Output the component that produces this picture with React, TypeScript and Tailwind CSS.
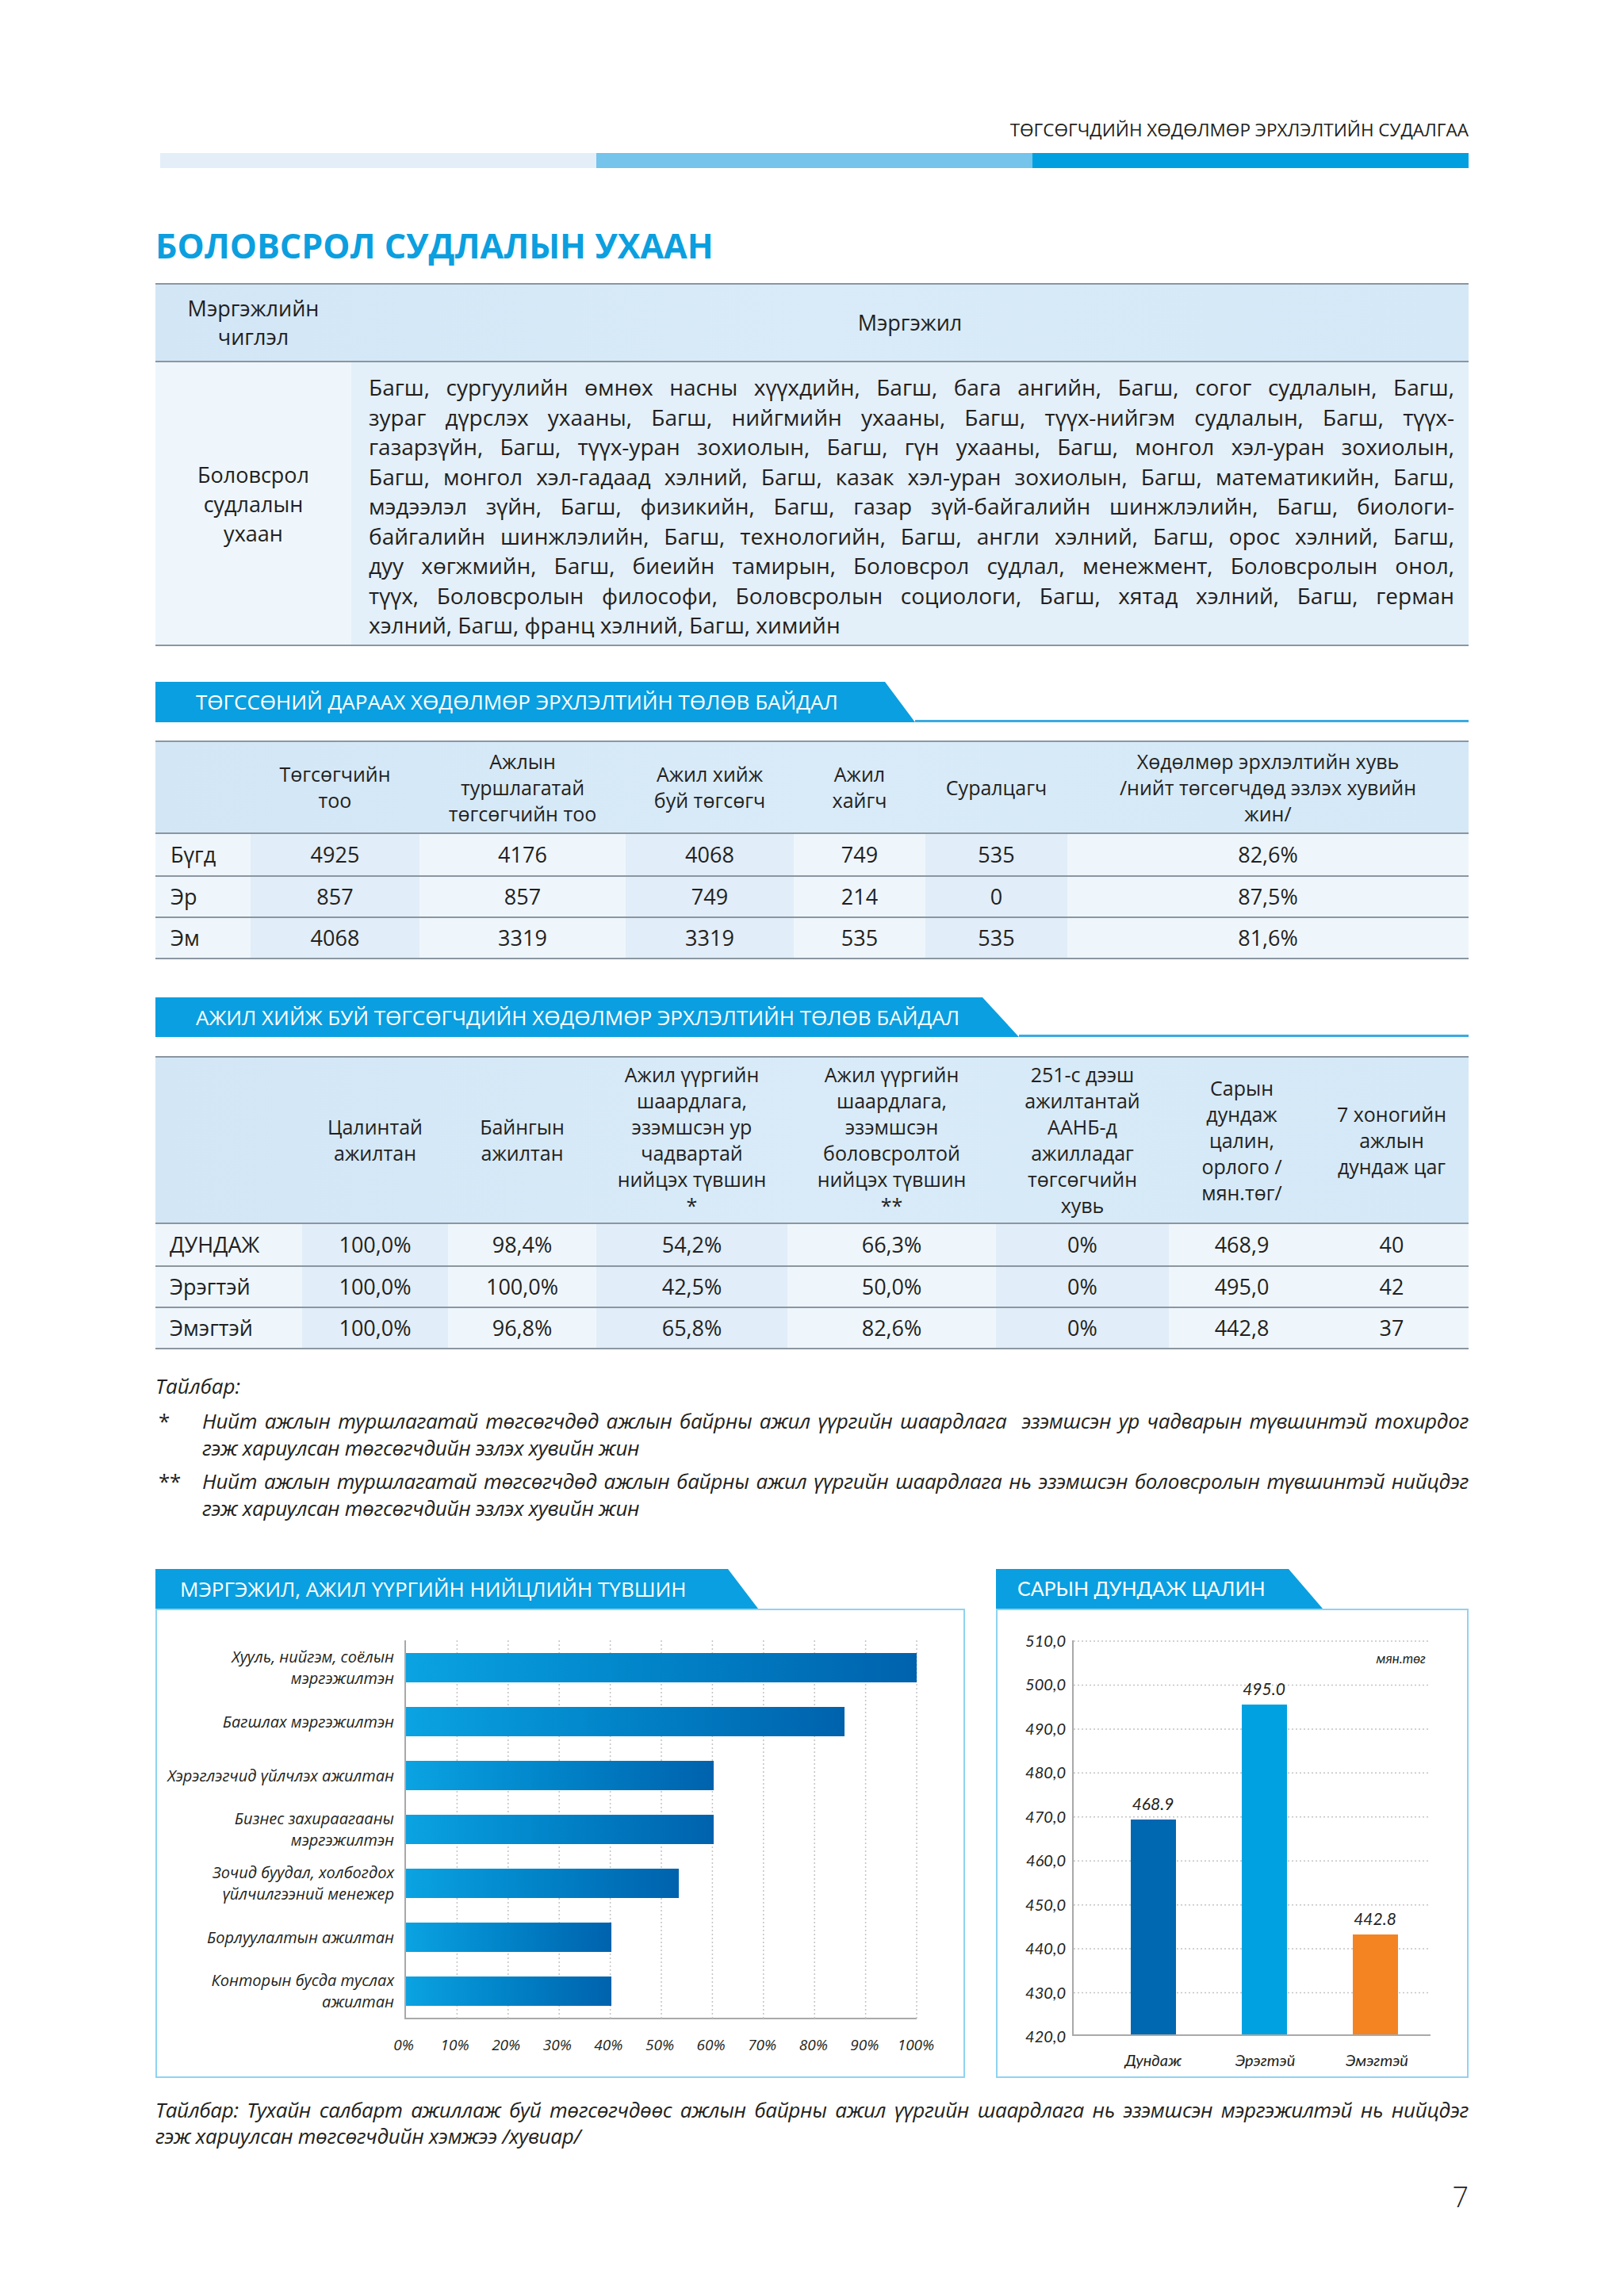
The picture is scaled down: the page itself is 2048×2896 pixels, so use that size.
import React from "react";

const sans = "font-['Open_Sans','Noto_Sans',sans-serif]";
const chartFont = "font-['Lato','Open_Sans',sans-serif]";

const bodyLines = [
  "Багш, сургуулийн өмнөх насны хүүхдийн, Багш, бага ангийн, Багш, согог судлалын, Багш,",
  "зураг дүрслэх ухааны, Багш, нийгмийн ухааны, Багш, түүх-нийгэм судлалын, Багш, түүх-",
  "газарзүйн, Багш, түүх-уран зохиолын, Багш, гүн ухааны, Багш, монгол хэл-уран зохиолын,",
  "Багш, монгол хэл-гадаад хэлний, Багш, казак хэл-уран зохиолын, Багш, математикийн, Багш,",
  "мэдээлэл зүйн, Багш, физикийн, Багш, газар зүй-байгалийн шинжлэлийн, Багш, биологи-",
  "байгалийн шинжлэлийн, Багш, технологийн, Багш, англи хэлний, Багш, орос хэлний, Багш,",
  "дуу хөгжмийн, Багш, биеийн тамирын, Боловсрол судлал, менежмент, Боловсролын онол,",
  "түүх, Боловсролын философи, Боловсролын социологи, Багш, хятад хэлний, Багш, герман",
  "хэлний, Багш, франц хэлний, Багш, химийн",
];

const t2Cols = ["w-[120px]", "w-[213px]", "w-[260px]", "w-[212px]", "w-[166px]", "w-[179px]", "flex-1"];
const t2Head = [
  [""],
  ["Төгсөгчийн", "тоо"],
  ["Ажлын", "туршлагатай", "төгсөгчийн тоо"],
  ["Ажил хийж", "буй төгсөгч"],
  ["Ажил", "хайгч"],
  ["Суралцагч"],
  ["Хөдөлмөр эрхлэлтийн хувь", "/нийт төгсөгчдөд эзлэх хувийн", "жин/"],
];
const t2Rows = [
  ["Бүгд", "4925", "4176", "4068", "749", "535", "82,6%"],
  ["Эр", "857", "857", "749", "214", "0", "87,5%"],
  ["Эм", "4068", "3319", "3319", "535", "535", "81,6%"],
];

const t3Cols = ["w-[185px]", "w-[184px]", "w-[187px]", "w-[241px]", "w-[263px]", "w-[218px]", "w-[184px]", "flex-1"];
const t3Head = [
  [""],
  ["Цалинтай", "ажилтан"],
  ["Байнгын", "ажилтан"],
  ["Ажил үүргийн", "шаардлага,", "эзэмшсэн ур", "чадвартай", "нийцэх түвшин", "*"],
  ["Ажил үүргийн", "шаардлага,", "эзэмшсэн", "боловсролтой", "нийцэх түвшин", "**"],
  ["251-с дээш", "ажилтантай", "ААНБ-д", "ажилладаг", "төгсөгчийн", "хувь"],
  ["Сарын", "дундаж", "цалин,", "орлого /", "мян.төг/"],
  ["7 хоногийн", "ажлын", "дундаж цаг"],
];
const t3Rows = [
  ["ДУНДАЖ", "100,0%", "98,4%", "54,2%", "66,3%", "0%", "468,9", "40"],
  ["Эрэгтэй", "100,0%", "100,0%", "42,5%", "50,0%", "0%", "495,0", "42"],
  ["Эмэгтэй", "100,0%", "96,8%", "65,8%", "82,6%", "0%", "442,8", "37"],
];

const matchBars = [
  { label: ["Хууль, нийгэм, соёлын", "мэргэжилтэн"], value: 100 },
  { label: ["Багшлах мэргэжилтэн"], value: 85.8 },
  { label: ["Хэрэглэгчид үйлчлэх ажилтан"], value: 60.3 },
  { label: ["Бизнес захираагааны", "мэргэжилтэн"], value: 60.3 },
  { label: ["Зочид буудал, холбогдох", "үйлчилгээний менежер"], value: 53.4 },
  { label: ["Борлуулалтын ажилтан"], value: 40.2 },
  { label: ["Конторын бусда туслах", "ажилтан"], value: 40.2 },
];

const salary = [
  { name: "Дундаж", value: 468.9, text: "468.9", color: "bg-[#0067b1]" },
  { name: "Эрэгтэй", value: 495.0, text: "495.0", color: "bg-[#00a1e1]" },
  { name: "Эмэгтэй", value: 442.8, text: "442.8", color: "bg-[#f48421]" },
];

function Banner({ children, boxClass }: { children: React.ReactNode; boxClass: string }) {
  return (
    <div className="flex items-end">
      <div className={`flex items-center bg-[#0a9fe0] text-white ${boxClass}`}>{children}</div>
      <div className="h-[3px] flex-1 bg-[#3aaae1]" />
    </div>
  );
}

function Lines({ lines }: { lines: string[] }) {
  return (
    <>
      {lines.map((l, i) => (
        <div key={i}>{l}</div>
      ))}
    </>
  );
}

function MatchChart() {
  return (
    <div className="flex w-[1021px] flex-col">
      <div className="flex h-[50px] items-center">
        <div className={`flex h-full w-[760px] items-center bg-[#0a9fe0] pl-[31px] text-[26px] text-white [clip-path:polygon(0_0,calc(100%_-_38px)_0,100%_100%,0_100%)] ${sans}`}>
          МЭРГЭЖИЛ, АЖИЛ ҮҮРГИЙН НИЙЦЛИЙН ТҮВШИН
        </div>
      </div>
      <div className="h-[592px] border-2 border-[#8fd3f1] pt-[38px]">
        <div className="flex">
          <div className="flex w-[299px] flex-col text-right text-[20px] italic leading-[27px] text-[#231f20]">
            {matchBars.map((b, i) => (
              <div key={i} className="flex h-[68px] flex-col items-end justify-center">
                <Lines lines={b.label} />
              </div>
            ))}
          </div>
          <div className="relative ml-[13px] h-[478px] w-[646px] border-b-2 border-l-2 border-[#a9a9a9]">
            <svg className="absolute inset-0" width="646" height="478">
              {Array.from({ length: 10 }, (_, i) => (
                <line
                  key={i}
                  x1={(i + 1) * 64.4}
                  x2={(i + 1) * 64.4}
                  y1={0}
                  y2={478}
                  stroke="#c4c4c4"
                  strokeWidth="1.5"
                  strokeDasharray="2 3"
                />
              ))}
            </svg>
            <div className="relative flex flex-col">
              {matchBars.map((b, i) => (
                <div key={i} className="flex h-[68px] items-center">
                  <div
                    className="h-[37px] bg-linear-to-r from-[#0ba3e2] to-[#0062ad]"
                    style={{ width: `${(b.value / 100) * 644}px` }}
                  />
                </div>
              ))}
            </div>
          </div>
        </div>
        <div className="ml-[281px] mt-[18px] flex w-[706px] justify-between text-[19px] italic text-[#231f20]">
          {Array.from({ length: 11 }, (_, i) => (
            <div key={i} className="w-[60px] text-center">
              {i * 10}%
            </div>
          ))}
        </div>
      </div>
    </div>
  );
}

function SalaryChart() {
  const px = 499 / 90;
  return (
    <div className="flex flex-1 flex-col">
      <div className="flex h-[50px] items-center">
        <div className={`flex h-full w-[412px] items-center bg-[#0a9fe0] pl-[27px] text-[25px] text-white [clip-path:polygon(0_0,calc(100%_-_43px)_0,100%_100%,0_100%)] ${chartFont}`}>
          САРЫН ДУНДАЖ ЦАЛИН
        </div>
      </div>
      <div className={`h-[592px] border-2 border-[#8fd3f1] pt-[38px] text-[#231f20] ${chartFont}`}>
        <div className="flex items-start">
          <div className="-mt-[13px] flex h-[525px] w-[86px] flex-col justify-between text-right text-[20px] italic leading-[26px]">
            {Array.from({ length: 10 }, (_, i) => (
              <div key={i}>{(510 - i * 10).toFixed(1).replace(".", ",")}</div>
            ))}
          </div>
          <div className="relative ml-[8px] h-[499px] w-[452px] border-b-2 border-l-2 border-[#a9a9a9]">
            <svg className="absolute inset-0" width="452" height="499">
              {Array.from({ length: 9 }, (_, i) => (
                <line
                  key={i}
                  x1={0}
                  x2={450}
                  y1={i * px * 10 + 1}
                  y2={i * px * 10 + 1}
                  stroke="#c4c4c4"
                  strokeWidth="1.5"
                  strokeDasharray="2 3"
                />
              ))}
            </svg>
            <div className="absolute right-[6px] top-[10px] text-[17px] italic">мян.төг</div>
            <div className="relative flex h-full items-end pl-[30px]">
              {salary.map((s) => (
                <div key={s.name} className="flex w-[141px] flex-col items-center justify-end">
                  <div className="mb-[7px] text-[21px] italic leading-[26px]">{s.text}</div>
                  <div className={`w-[57px] ${s.color}`} style={{ height: `${(s.value - 420) * px}px` }} />
                </div>
              ))}
            </div>
          </div>
        </div>
        <div className="ml-[126px] mt-[4px] flex text-[20px] italic leading-[26px]">
          {salary.map((s) => (
            <div key={s.name} className="w-[141px] text-center">
              {s.name}
            </div>
          ))}
        </div>
      </div>
    </div>
  );
}

export default function App() {
  return (
    <div className={`h-[2896px] w-[2048px] bg-white text-[#231f20] ${sans}`}>
      <div className="ml-[196px] w-[1656px] pt-[149px]">
        {/* header */}
        <div className="text-right text-[22.5px] leading-[30px]">ТӨГСӨГЧДИЙН ХӨДӨЛМӨР ЭРХЛЭЛТИЙН СУДАЛГАА</div>
        <div className="mt-[14px] flex h-[19px] pl-[6px]">
          <div className="flex-1 bg-[#e3eef8]" />
          <div className="flex-1 bg-[#74c4ec]" />
          <div className="flex-1 bg-[#00a0e0]" />
        </div>

        <div className="mt-[72px] text-[43px] font-bold leading-[52px] text-[#0b9fdf]">БОЛОВСРОЛ СУДЛАЛЫН УХААН</div>

        {/* table 1 */}
        <div className="mt-[21px] border-y-2 border-[#8b96a0]">
          <div className="flex h-[98px] border-b-2 border-[#8b96a0] bg-linear-to-r from-[#d2e6f6] via-[#d9ebf8] to-[#d4e8f7] text-[27px] leading-[36px]">
            <div className="flex w-[247px] flex-col items-center justify-center text-center">
              <div>Мэргэжлийн</div>
              <div>чиглэл</div>
            </div>
            <div className="flex flex-1 items-center justify-center">Мэргэжил</div>
          </div>
          <div className="flex h-[356px]">
            <div className="flex w-[247px] flex-col items-center justify-center bg-[#eef6fc] text-center text-[27px] leading-[37px]">
              <div>Боловсрол</div>
              <div>судлалын</div>
              <div>ухаан</div>
            </div>
            <div className="flex-1 bg-[#e3eff9] pl-[22px] pr-[18px] pt-[13px] text-[28px] leading-[37.5px]">
              {bodyLines.map((l, i) => (
                <div key={i} className={i < bodyLines.length - 1 ? "text-justify [text-align-last:justify]" : ""}>
                  {l}
                </div>
              ))}
            </div>
          </div>
        </div>

        {/* banner 1 */}
        <div className="mt-[45px]">
          <Banner boxClass="h-[51px] w-[958px] pl-[51px] text-[26px] [clip-path:polygon(0_0,calc(100%_-_38px)_0,100%_100%,0_100%)]">
            ТӨГССӨНИЙ ДАРААХ ХӨДӨЛМӨР ЭРХЛЭЛТИЙН ТӨЛӨВ БАЙДАЛ
          </Banner>
        </div>

        {/* table 2 */}
        <div className="mt-[23px] border-y-2 border-[#8b96a0]">
          <div className="flex h-[116px] border-b-2 border-[#8b96a0] bg-linear-to-r from-[#d2e6f6] via-[#d9ebf8] to-[#d4e8f7] text-[25px] leading-[33px]">
            {t2Head.map((h, i) => (
              <div key={i} className={`${t2Cols[i]} flex flex-col items-center justify-center text-center`}>
                <Lines lines={h} />
              </div>
            ))}
          </div>
          {t2Rows.map((r, ri) => (
            <div key={ri} className={`flex h-[52px] text-[27px] ${ri > 0 ? "border-t-2 border-[#8b96a0]" : ""}`}>
              {r.map((c, ci) => (
                <div
                  key={ci}
                  className={`${t2Cols[ci]} flex items-center ${ci === 0 ? "pl-[19px]" : "justify-center"} ${ci % 2 === 1 ? "bg-[#e1edf8]" : "bg-[#eef6fc]"}`}
                >
                  {c}
                </div>
              ))}
            </div>
          ))}
        </div>

        {/* banner 2 */}
        <div className="mt-[48px]">
          <Banner boxClass="h-[50px] w-[1089px] pl-[51px] text-[26px] [clip-path:polygon(0_0,calc(100%_-_46px)_0,100%_100%,0_100%)]">
            АЖИЛ ХИЙЖ БУЙ ТӨГСӨГЧДИЙН ХӨДӨЛМӨР ЭРХЛЭЛТИЙН ТӨЛӨВ БАЙДАЛ
          </Banner>
        </div>

        {/* table 3 */}
        <div className="mt-[24px] border-y-2 border-[#8b96a0]">
          <div className="flex h-[210px] border-b-2 border-[#8b96a0] bg-linear-to-r from-[#d2e6f6] via-[#d9ebf8] to-[#d4e8f7] text-[25px] leading-[33px]">
            {t3Head.map((h, i) => (
              <div key={i} className={`${t3Cols[i]} flex flex-col items-center justify-center text-center`}>
                <Lines lines={h} />
              </div>
            ))}
          </div>
          {t3Rows.map((r, ri) => (
            <div key={ri} className={`flex h-[52px] text-[27px] ${ri > 0 ? "border-t-2 border-[#8b96a0]" : ""}`}>
              {r.map((c, ci) => (
                <div
                  key={ci}
                  className={`${t3Cols[ci]} flex items-center ${ci === 0 ? "pl-[18px]" : "justify-center"} ${ci === 1 || ci === 3 || ci === 5 ? "bg-[#e1edf8]" : "bg-[#eef6fc]"}`}
                >
                  {c}
                </div>
              ))}
            </div>
          ))}
        </div>

        {/* footnotes */}
        <div className="mt-[29px] text-[26px] italic leading-[34px]">Тайлбар:</div>
        <div className="mt-[10px] flex text-[26px] leading-[34px] tracking-[-0.3px]">
          <div className="w-[59px] pl-[4px]">*</div>
          <div className="flex-1 italic">
            <div className="text-justify [text-align-last:justify]">
              Нийт ажлын туршлагатай төгсөгчдөд ажлын байрны ажил үүргийн шаардлага&nbsp; эзэмшсэн ур чадварын түвшинтэй тохирдог
            </div>
            <div>гэж хариулсан төгсөгчдийн эзлэх хувийн жин</div>
          </div>
        </div>
        <div className="mt-[8px] flex text-[26px] leading-[34px] tracking-[-0.3px]">
          <div className="w-[59px] pl-[4px]">**</div>
          <div className="flex-1 italic">
            <div className="text-justify [text-align-last:justify]">
              Нийт ажлын туршлагатай төгсөгчдөд ажлын байрны ажил үүргийн шаардлага нь эзэмшсэн боловсролын түвшинтэй нийцдэг
            </div>
            <div>гэж хариулсан төгсөгчдийн эзлэх хувийн жин</div>
          </div>
        </div>

        {/* charts */}
        <div className="mt-[60px] flex gap-[39px]">
          <MatchChart />
          <SalaryChart />
        </div>

        <div className="mt-[24px] text-[26px] italic leading-[33px] tracking-[-0.3px]">
          <div className="text-justify [text-align-last:justify]">
            Тайлбар: Тухайн салбарт ажиллаж буй төгсөгчдөөс ажлын байрны ажил үүргийн шаардлага нь эзэмшсэн мэргэжилтэй нь нийцдэг
          </div>
          <div>гэж хариулсан төгсөгчдийн хэмжээ /хувиар/</div>
        </div>

        <div className="mt-[38px] text-right text-[36px] font-light leading-[44px]">7</div>
      </div>
    </div>
  );
}
